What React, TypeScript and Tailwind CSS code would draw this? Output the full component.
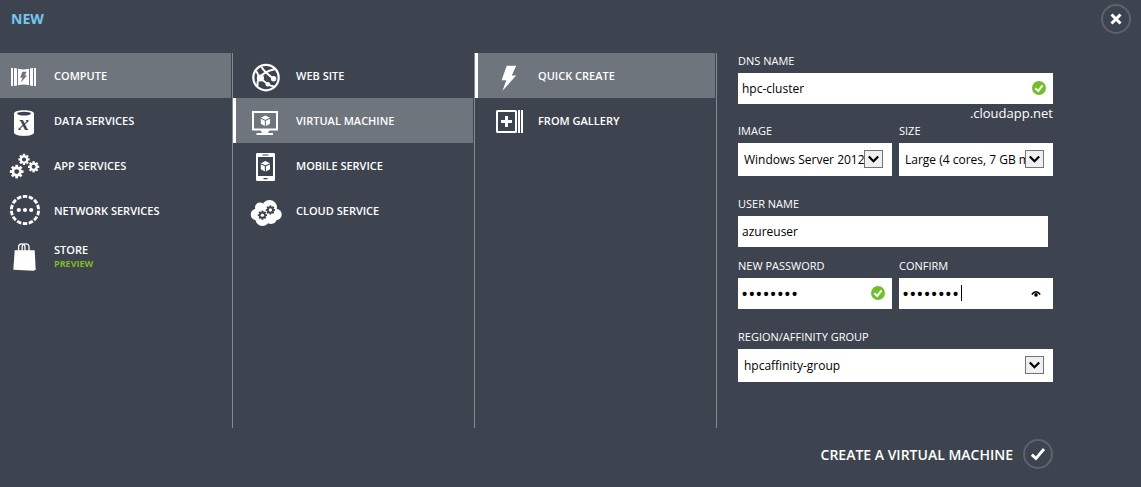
import { useState, type ReactNode } from "react";

const DARK = "#3e444f";
const HIGHLIGHT = "#6e757c";

function Glyph({ children }: { children: ReactNode }) {
  return (
    <svg viewBox="0 0 32 45" className="h-[45px] w-8 shrink-0" fill="#fff" aria-hidden="true">
      {children}
    </svg>
  );
}

function Gear({ x, y, r, color = "#fff", hole = DARK }: { x: number; y: number; r: number; color?: string; hole?: string }) {
  return (
    <g transform={`translate(${x} ${y})`}>
      {[0, 45, 90, 135].map((a) => (
        <rect key={a} x={-r * 0.2} y={-r} width={r * 0.4} height={r * 2} fill={color} transform={`rotate(${a})`} />
      ))}
      <circle r={r * 0.75} fill={color} />
      <circle r={r * 0.36} fill={hole} />
    </g>
  );
}

function Cube({ y, line }: { y: number; line: string }) {
  return (
    <g transform={`translate(15.4 ${y})`}>
      <path d="M0-5.4 4.6-3v6L0 5.4-4.6 3v-6Z" />
      <path d="M-4.6-2.6 0-.4 4.6-2.6M0-.4V5.4" fill="none" stroke={line} strokeWidth="1.1" />
    </g>
  );
}

const icons: Record<string, ReactNode> = {
  compute: (
    <Glyph>
      <path d="M3 15h2v18H3zM6 15l3 .5v17L6 33zM10 15.8q5.5 1.2 11 0v16.4q-5.5-1.2-11 0zM22 15.5l3-.5v18l-3-.5zM26 15h2v18h-2z" />
      <path d="M14.3 18.8h4.4l-1.9 3.8h2.3l-6.2 7 1.6-4.8h-2.3z" fill={HIGHLIGHT} />
    </Glyph>
  ),
  data: (
    <Glyph>
      <path d="M6 15.5C6 11 26 11 26 15.5V34.5C26 39 6 39 6 34.5Z" />
      <ellipse cx="16" cy="15.6" rx="7" ry="1.9" fill={DARK} />
      <text x="15.8" y="32" textAnchor="middle" fontFamily="Liberation Serif, serif" fontStyle="italic" fontWeight="700" fontSize="21" fill={DARK}>
        x
      </text>
    </Glyph>
  ),
  app: (
    <Glyph>
      <Gear x={8.7} y={28.6} r={6.8} />
      <Gear x={16} y={16.4} r={5.6} />
      <Gear x={25.6} y={23.8} r={5.6} />
    </Glyph>
  ),
  network: (
    <Glyph>
      <circle cx="17" cy="22" r="13.6" fill="none" stroke="#fff" strokeWidth="2.9" pathLength="140" strokeDasharray="7.4 2.6" strokeDashoffset="8.7" />
      <circle cx="10.8" cy="22" r="2.1" />
      <circle cx="17" cy="22" r="2.1" />
      <circle cx="23.2" cy="22" r="2.1" />
    </Glyph>
  ),
  store: (
    <Glyph>
      <path d="M6.7 17.3h20l1 19.5-2.2 1L5.3 36.8Z" />
      <path d="M10.6 18v-4.2q0-3 3-3t3.4 3V18M14.2 18v-4.2q0-3 3.4-3t3.4 3V18" fill="none" stroke="#fff" strokeWidth="1.3" />
    </Glyph>
  ),
  web: (
    <Glyph>
      <circle cx="16" cy="24.6" r="12.7" fill="none" stroke="#fff" strokeWidth="2.2" />
      <circle cx="10.4" cy="25" r="3.6" />
      <circle cx="23.6" cy="25.8" r="2.7" />
      <circle cx="17.8" cy="31.2" r="2.3" />
      <path
        d="M6 18Q8 20 9 25M9 25Q7 29 7.5 33M10.4 25.5 18 31.2Q21 33.5 24.5 33.5M10.4 24Q14 18.5 24.5 16.2M11.5 14Q14 18.5 23.6 25.8"
        fill="none"
        stroke="#fff"
        strokeWidth="1.9"
      />
    </Glyph>
  ),
  vm: (
    <Glyph>
      <rect x="3" y="14" width="24" height="17.5" fill="none" stroke="#fff" strokeWidth="2" />
      <path d="M10.5 32h9l-1.5 3h5v2H6.5v-2H12z" />
      <Cube y={22.8} line={HIGHLIGHT} />
    </Glyph>
  ),
  mobile: (
    <Glyph>
      <rect x="6" y="10" width="19" height="28" rx="1.2" />
      <path d="M8 14h15v19H8zM12.5 11.5h6v1h-6zM13.5 35h4v1.2h-4z" fill={DARK} />
      <Cube y={23.3} line={DARK} />
    </Glyph>
  ),
  cloud: (
    <Glyph>
      <circle cx="6.4" cy="26.5" r="5.7" />
      <circle cx="10" cy="19.5" r="5" />
      <circle cx="19.5" cy="19.5" r="7.5" />
      <circle cx="26" cy="26.5" r="5.7" />
      <circle cx="12.5" cy="31" r="7" />
      <circle cx="21" cy="30" r="6" />
      <Gear x={12.4} y={27.2} r={4.6} color={DARK} hole="#fff" />
      <Gear x={20.4} y={22} r={4.6} color={DARK} hole="#fff" />
    </Glyph>
  ),
  bolt: (
    <Glyph>
      <path d="M14.7 12.7H24.2L19.8 22.5H24.2L10.5 37.7 14.3 27.3H9.6Z" />
    </Glyph>
  ),
  gallery: (
    <Glyph>
      <rect x="5" y="13" width="19" height="21" rx=".5" fill="none" stroke="#fff" strokeWidth="2" />
      <path d="M26 12h2v23h-2zM29 12h2v23h-2zM13 18h3v4h4v3h-4v4h-3v-4H9v-3h4z" />
    </Glyph>
  ),
};

type Item = { label: string; icon: string; note?: string };

function Menu({ items, initial, first = false }: { items: Item[]; initial: number; first?: boolean }) {
  const [selected, setSelected] = useState(initial);
  return (
    <nav className="min-h-[375px] border-r border-[#868a91] pr-px">
      {items.map((item, i) => (
        <button
          key={item.label}
          type="button"
          onClick={() => setSelected(i)}
          className={`flex h-[45px] w-full items-center gap-[14px] text-left text-[11px] leading-[14px] font-semibold text-white ${
            first ? "pl-2" : "border-l-3 pl-[14px]"
          } ${selected === i ? "border-white bg-[#6e757c]" : "border-transparent"}`}
        >
          {icons[item.icon]}
          <span className={item.note ? "flex flex-col pt-[3px]" : "flex flex-col"}>
            {item.label}
            {item.note && <span className="text-[9px] font-bold text-[#7db928]">{item.note}</span>}
          </span>
        </button>
      ))}
    </nav>
  );
}

function Valid() {
  return (
    <svg viewBox="0 0 14 14" className="pointer-events-none absolute top-2 right-[7px] size-[14px]" aria-hidden="true">
      <circle cx="7" cy="7" r="7" fill="#72bf2c" />
      <path d="M3.4 7.2 6.2 9.9 10.6 4.3" fill="none" stroke="#fff" strokeWidth="2" />
    </svg>
  );
}

function Field({ id, label, value, type = "text", children }: { id: string; label: string; value: string; type?: string; children?: ReactNode }) {
  return (
    <div className="flex min-w-0 flex-col gap-1">
      <label htmlFor={id} className="text-[11px] leading-4 text-white">
        {label}
      </label>
      <div className="relative">
        <input
          id={id}
          type={type}
          defaultValue={value}
          className={`block h-[31px] w-full bg-white pr-7 text-black outline-none ${type === "password" ? "pl-[3px] text-[19px]" : "pl-1 text-[12px]"}`}
        />
        {children}
      </div>
    </div>
  );
}

function Select({ id, label, value }: { id: string; label: string; value: string }) {
  return (
    <div className="flex min-w-0 flex-col gap-1">
      <label htmlFor={id} className="text-[11px] leading-4 text-white">
        {label}
      </label>
      <div className="relative">
        <select id={id} className="block h-[33px] w-full appearance-none bg-white pr-7 pl-[6px] text-[12px] text-black outline-none">
          <option>{value}</option>
        </select>
        <svg viewBox="0 0 19 18" className="pointer-events-none absolute top-[7px] right-[9px] h-[18px] w-[19px]" aria-hidden="true">
          <rect x=".5" y=".5" width="18" height="17" fill="#f0f0f0" stroke="#70747a" />
          <path d="M4.8 6.5 9.5 11.3 14.2 6.5" fill="none" stroke="#000" strokeWidth="2.2" />
        </svg>
      </div>
    </div>
  );
}

export default function App() {
  return (
    <div className="flex min-h-screen flex-col bg-[#3e444f] font-['Open_Sans','Noto_Sans',sans-serif]">
      <header className="flex h-[53px] items-start justify-between pt-1 pr-[10px] pl-[11px]">
        <h1 className="text-[14px] leading-[30px] font-bold text-[#75c6ef]">NEW</h1>
        <button type="button" aria-label="Close" className="flex size-[30px] items-center justify-center rounded-full border-2 border-[#5d626c]">
          <svg viewBox="0 0 12 12" className="size-3" aria-hidden="true">
            <path d="M1.5 1.5 10.5 10.5M10.5 1.5 1.5 10.5" stroke="#fff" strokeWidth="3" />
          </svg>
        </button>
      </header>

      <main className="grid grid-cols-[233fr_242fr_242fr_424fr] items-start">
        <Menu
          first
          initial={0}
          items={[
            { label: "COMPUTE", icon: "compute" },
            { label: "DATA SERVICES", icon: "data" },
            { label: "APP SERVICES", icon: "app" },
            { label: "NETWORK SERVICES", icon: "network" },
            { label: "STORE", icon: "store", note: "PREVIEW" },
          ]}
        />
        <Menu
          initial={1}
          items={[
            { label: "WEB SITE", icon: "web" },
            { label: "VIRTUAL MACHINE", icon: "vm" },
            { label: "MOBILE SERVICE", icon: "mobile" },
            { label: "CLOUD SERVICE", icon: "cloud" },
          ]}
        />
        <Menu
          initial={0}
          items={[
            { label: "QUICK CREATE", icon: "bolt" },
            { label: "FROM GALLERY", icon: "gallery" },
          ]}
        />
        <form className="flex flex-col pr-[88px] pl-[21px]" onSubmit={(e) => e.preventDefault()}>
          <Field id="dns" label="DNS NAME" value="hpc-cluster">
            <Valid />
          </Field>
          <p className="text-right text-[13px] leading-[19px] text-white">.cloudapp.net</p>
          <div className="grid grid-cols-2 gap-[7px]">
            <Select id="image" label="IMAGE" value="Windows Server 2012 R2 Datacenter" />
            <Select id="size" label="SIZE" value="Large (4 cores, 7 GB memory)" />
          </div>
          <div className="mt-5 pr-[5px]">
            <Field id="user" label="USER NAME" value="azureuser" />
          </div>
          <div className="mt-[11px] grid grid-cols-2 gap-[7px]">
            <Field id="password" label="NEW PASSWORD" value="password" type="password">
              <Valid />
            </Field>
            <Field id="confirm" label="CONFIRM" value="password" type="password">
              <span className="pointer-events-none absolute top-[7px] left-[62px] h-4 w-px bg-black" />
              <svg viewBox="0 0 10 8" className="pointer-events-none absolute top-3 right-3 h-2 w-[10px]" aria-hidden="true">
                <path d="M.8 4.5Q5-1.2 9.2 4.5" fill="none" stroke="#000" strokeWidth="1.5" />
                <circle cx="5" cy="4.9" r="1.8" />
              </svg>
            </Field>
          </div>
          <div className="mt-5">
            <Select id="region" label="REGION/AFFINITY GROUP" value="hpcaffinity-group" />
          </div>
          <button type="submit" className="mt-[57px] flex items-center gap-[10px] self-end text-[14px] font-semibold whitespace-nowrap text-white">
            CREATE A VIRTUAL MACHINE
            <span className="flex size-[30px] items-center justify-center rounded-full border-2 border-[#5d626c]">
              <svg viewBox="0 0 16 14" className="h-[14px] w-4" aria-hidden="true">
                <path d="M1.8 7.6 6 11.5 14 2" fill="none" stroke="#fff" strokeWidth="2.8" />
              </svg>
            </span>
          </button>
        </form>
      </main>
    </div>
  );
}
